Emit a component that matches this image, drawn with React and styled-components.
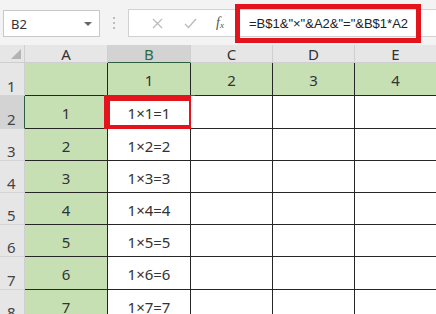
import styled, { createGlobalStyle } from "styled-components";

const GlobalStyle = createGlobalStyle`
  html, body {
    margin: 0;
    padding: 0;
    background: #f3f3f3;
  }
  body {
    font-family: "Noto Sans", "Liberation Sans", "Noto Sans CJK SC", sans-serif;
  }
`;

const Screen = styled.div`
  width: 436px;
  height: 314px;
  overflow: hidden;
  background: #f3f3f3;
`;

const Toolbar = styled.div`
  height: 45px;
  display: flex;
  align-items: flex-start;
  padding: 9px 0 0 3px;
  box-sizing: border-box;
`;

const NameBox = styled.div`
  width: 97px;
  height: 27px;
  margin-top: 1px;
  box-sizing: border-box;
  background: #fff;
  border: 1px solid #c8c8c8;
  display: flex;
  align-items: center;
  justify-content: space-between;
  padding: 0 7px 0 7px;
  font-size: 13px;
  color: #333;
`;

const DropArrow = styled.span`
  width: 0;
  height: 0;
  border-left: 4px solid transparent;
  border-right: 4px solid transparent;
  border-top: 4px solid #666;
`;

const Grip = styled.div`
  width: 28px;
  height: 28px;
  display: flex;
  flex-direction: column;
  align-items: center;
  justify-content: center;
  gap: 3px;

  span {
    width: 2px;
    height: 2px;
    background: #bdbdbd;
  }
`;

const FormulaBox = styled.div`
  flex: 1;
  height: 28px;
  box-sizing: border-box;
  background: #fff;
  border: 1px solid #d2d2d2;
  border-right: none;
  display: flex;
  align-items: center;
  padding-left: 12px;
`;

const IconSlot = styled.div`
  width: 33px;
  height: 26px;
  display: flex;
  align-items: center;
  justify-content: center;
`;

const FxLabel = styled.span`
  width: 26px;
  font-family: "Liberation Serif", "DejaVu Serif", serif;
  font-style: italic;
  font-size: 14px;
  color: #555;
  text-align: center;

  sub {
    font-size: 9px;
    vertical-align: baseline;
    position: relative;
    top: 1px;
  }
`;

const FormulaText = styled.div`
  position: relative;
  width: 186px;
  height: 26px;
  margin-left: 2px;
  box-sizing: border-box;
  padding-left: 14px;
  display: flex;
  align-items: center;
  font-family: "Liberation Sans", Arial, sans-serif;
  font-size: 13px;
  color: #222;
  white-space: nowrap;

  &::after {
    content: "";
    position: absolute;
    left: 0;
    right: 0;
    top: -6px;
    bottom: -7px;
    border: 5px solid #e3141c;
  }
`;

const Sheet = styled.div`
  display: grid;
  grid-template-columns: 25px 83px 83px 82px 82px 82px;
  grid-template-rows: 18px 33px 33px 32px 32px 32px 32px 33px 32px;
  font-size: 15px;
  color: #333;
`;

const Corner = styled.div`
  background: #e6e6e6;
  border-right: 1px solid #cfcfcf;
  border-bottom: 1px solid #cfcfcf;
  display: flex;
  align-items: flex-end;
  justify-content: flex-end;
  padding: 0 3px 3px 0;
  box-sizing: border-box;

  span {
    width: 0;
    height: 0;
    border-left: 10px solid transparent;
    border-bottom: 10px solid #b3b3b3;
  }
`;

const ColHead = styled.div`
  background: ${p => (p.$selected ? "#d3d3d3" : "#e6e6e6")};
  color: ${p => (p.$selected ? "#2e6b45" : "#333")};
  border-right: 1px solid #cfcfcf;
  border-bottom: 1px solid ${p => (p.$selected ? "#2d5f3e" : "#cfcfcf")};
  box-sizing: border-box;
  display: flex;
  align-items: center;
  justify-content: center;
  font-size: 15px;
  line-height: 1;
  padding-top: 1px;
`;

const RowHead = styled.div`
  background: ${p => (p.$selected ? "#d3d3d3" : "#e6e6e6")};
  color: #444;
  border-right: 1px solid ${p => (p.$selected ? "#2d5f3e" : "#cfcfcf")};
  border-bottom: 1px solid #d4d4d4;
  box-sizing: border-box;
  display: flex;
  align-items: flex-end;
  padding: 0 0 1px 7px;
  font-size: 15px;
  line-height: 1;
`;

const Cell = styled.div`
  position: relative;
  background: ${p => (p.$green ? "#c6e0b4" : "#fff")};
  border-right: 1px solid #262626;
  border-bottom: 1px solid #262626;
  box-sizing: border-box;
  display: flex;
  align-items: center;
  justify-content: center;
  padding-top: 2px;
  white-space: nowrap;

  ${p =>
    p.$marked &&
    `
    &::after {
      content: "";
      position: absolute;
      left: -4px;
      right: -5px;
      top: -1px;
      bottom: -3px;
      border: 6px solid #e3141c;
    }
  `}
`;

const columns = ["A", "B", "C", "D", "E"];

export default function App() {
  const rows = [1, 2, 3, 4, 5, 6, 7, 8];

  return (
    <Screen>
      <GlobalStyle />
      <Toolbar>
        <NameBox>
          <span>B2</span>
          <DropArrow />
        </NameBox>
        <Grip>
          <span />
          <span />
          <span />
        </Grip>
        <FormulaBox>
          <IconSlot>
            <svg width="11" height="11" viewBox="0 0 11 11">
              <path d="M1 1 L10 10 M10 1 L1 10" stroke="#bcbcbc" strokeWidth="1.3" fill="none" />
            </svg>
          </IconSlot>
          <IconSlot>
            <svg width="13" height="11" viewBox="0 0 13 11">
              <path d="M1 6 L4.5 9.5 L12 1" stroke="#bcbcbc" strokeWidth="1.4" fill="none" />
            </svg>
          </IconSlot>
          <FxLabel>
            f<sub>x</sub>
          </FxLabel>
          <FormulaText>=B$1&amp;"×"&amp;A2&amp;"="&amp;B$1*A2</FormulaText>
        </FormulaBox>
      </Toolbar>

      <Sheet>
        <Corner>
          <span />
        </Corner>
        {columns.map(c => (
          <ColHead key={c} $selected={c === "B"}>
            {c}
          </ColHead>
        ))}
        {rows.map(r => (
          <Row key={r} r={r} />
        ))}
      </Sheet>
    </Screen>
  );
}

function Row({ r }) {
  const isHeader = r === 1;
  return (
    <>
      <RowHead $selected={r === 2}>{r}</RowHead>
      <Cell $green>{isHeader ? "" : r - 1}</Cell>
      <Cell $green={isHeader} $marked={r === 2}>
        {isHeader ? 1 : `1×${r - 1}=${r - 1}`}
      </Cell>
      <Cell $green={isHeader}>{isHeader ? 2 : ""}</Cell>
      <Cell $green={isHeader}>{isHeader ? 3 : ""}</Cell>
      <Cell $green={isHeader}>{isHeader ? 4 : ""}</Cell>
    </>
  );
}
